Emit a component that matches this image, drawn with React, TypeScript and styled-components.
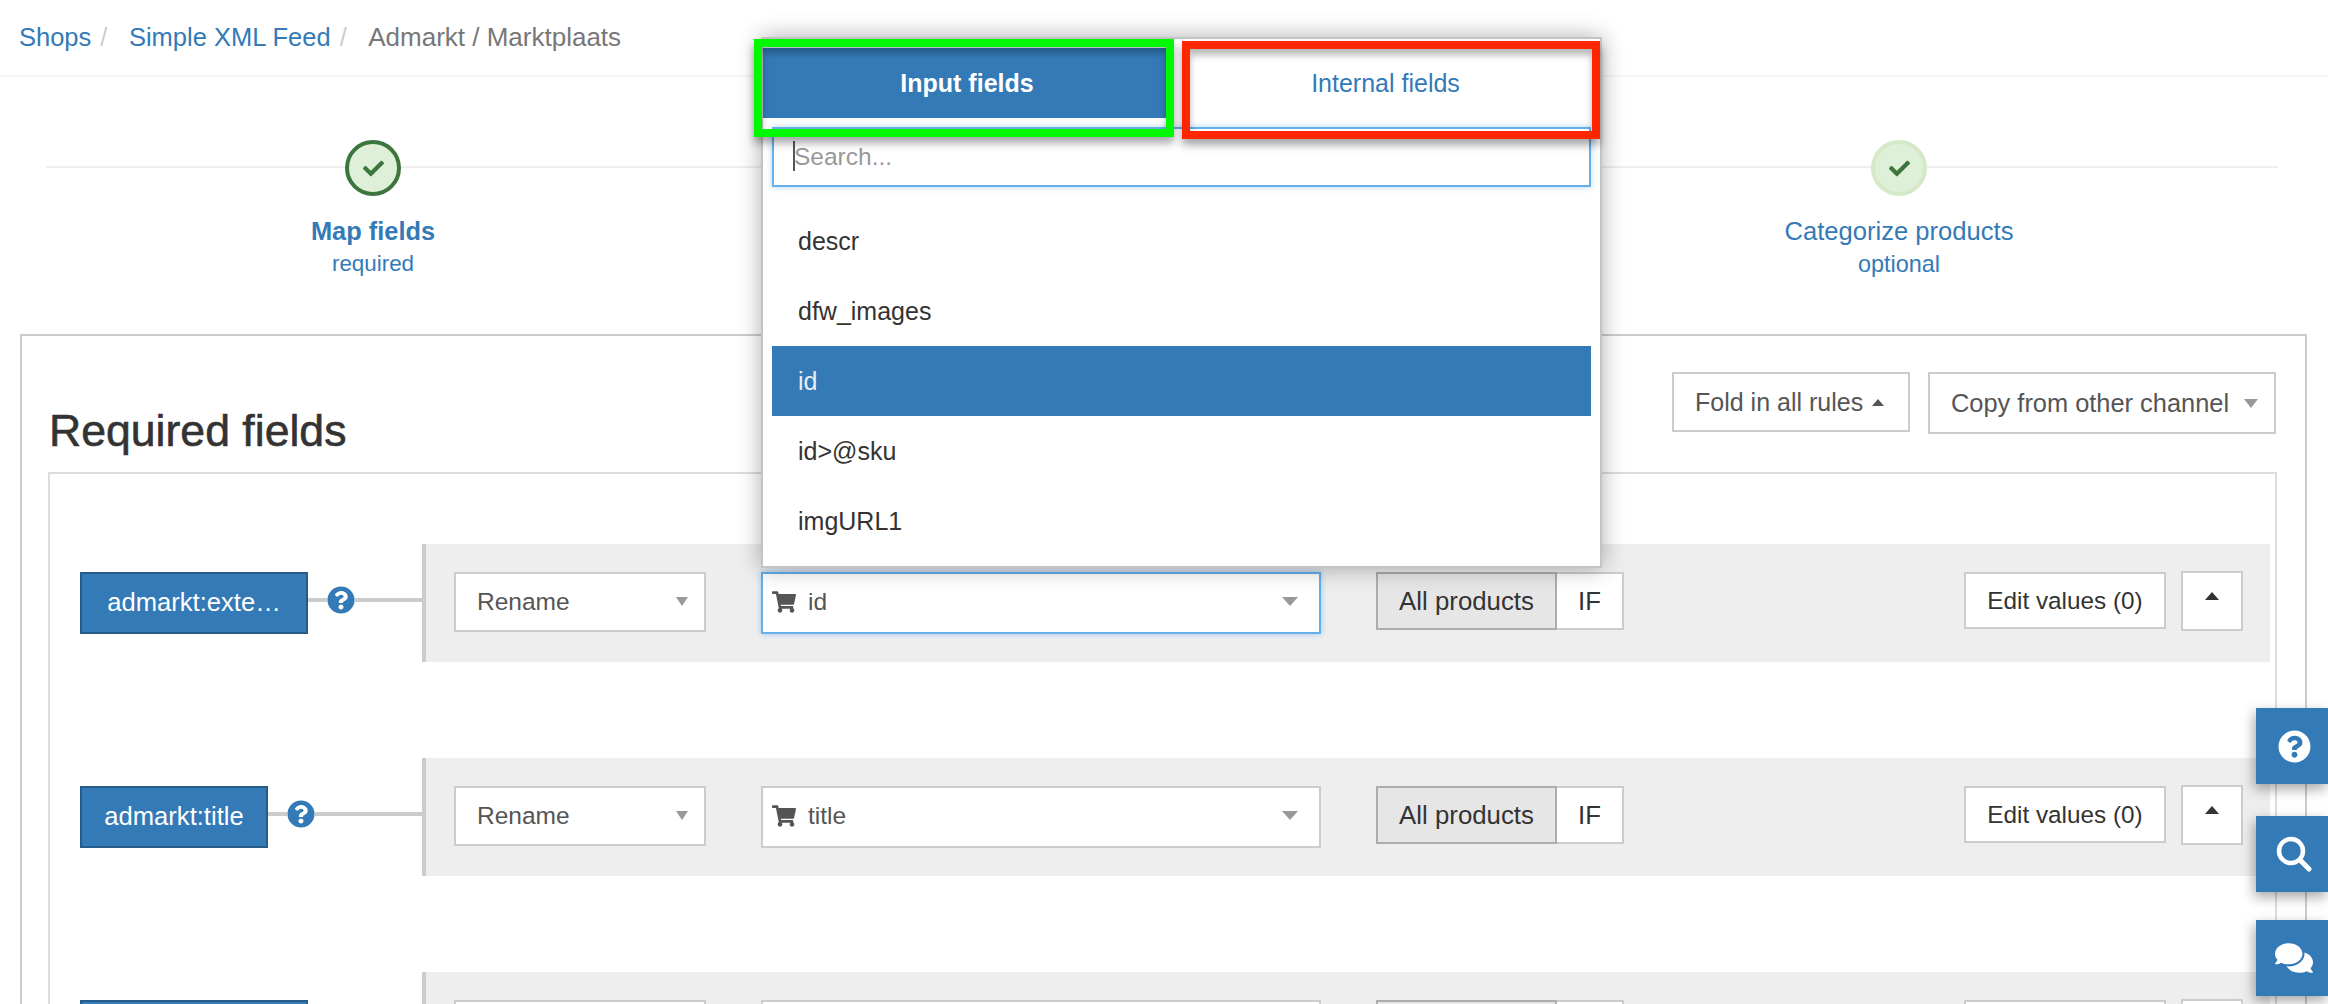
import React from "react";
import styled, { createGlobalStyle } from "styled-components";
import { FaCheck, FaComments, FaQuestionCircle, FaShoppingCart } from "react-icons/fa";

const GlobalStyle = createGlobalStyle`
  * {
    box-sizing: border-box;
  }
  html, body {
    margin: 0;
    padding: 0;
    background: #fff;
    font-family: "Liberation Sans", Arial, sans-serif;
    color: #333;
  }
`;

const Page = styled.div`
  position: relative;
  width: 2328px;
  height: 1004px;
  overflow: hidden;
  background: #fff;
`;

const Breadcrumb = styled.nav`
  display: flex;
  align-items: center;
  height: 77px;
  padding-left: 19px;
  padding-bottom: 1px;
  border-bottom: 2px solid #f5f5f5;
  font-size: 25.5px;
`;

const Crumb = styled.a<{ $active?: boolean }>`
  color: ${(p) => (p.$active ? "#777" : "#337ab7")};
  font-size: ${(p) => (p.$active ? 26 : 25.5)}px;
`;

const CrumbSep = styled.span`
  margin: 0 21.5px 0 9px;
  color: #ccc;
`;

const Stepper = styled.section`
  position: relative;
  display: flex;
  justify-content: space-between;
  height: 257px;
  margin: 0 50px 0 46px;
  padding: 63px 179px 0 127px;

  &::before {
    content: "";
    position: absolute;
    top: 89px;
    left: 0;
    right: 0;
    height: 2px;
    background: #eee;
  }
`;

const Step = styled.div`
  position: relative;
  display: flex;
  flex-direction: column;
  align-items: center;
  width: 400px;
  color: #337ab7;
`;

const StepCircle = styled.div<{ $current?: boolean }>`
  display: flex;
  align-items: center;
  justify-content: center;
  width: 56px;
  height: 56px;
  border-radius: 50%;
  border: 4px solid ${(p) => (p.$current ? "#3c763d" : "#d6e9c6")};
  background: #dff0d8;
  color: #3c763d;
`;

const StepTitle = styled.div<{ $current?: boolean }>`
  margin-top: 20px;
  font-size: ${(p) => (p.$current ? 25.4 : 25.6)}px;
  line-height: 30px;
  font-weight: ${(p) => (p.$current ? 700 : 400)};
`;

const StepHint = styled.div<{ $current?: boolean }>`
  margin-top: 3px;
  font-size: ${(p) => (p.$current ? 22.4 : 23.4)}px;
  line-height: 30px;
`;

const OuterPanel = styled.section`
  margin: 0 21px 0 20px;
  padding: 36px 28px 0 26px;
  border: 2px solid #ccc;
  border-bottom: 0;
  height: 700px;
`;

const PanelHead = styled.header`
  display: flex;
  align-items: flex-start;
  gap: 18px;
  height: 100px;
  padding-right: 1px;
`;

const Heading = styled.h2`
  margin: 34px auto 0 1px;
  font-size: 44.6px;
  line-height: 50px;
  font-weight: 400;
  color: #333;
  -webkit-text-stroke: 0.6px #333;
`;

const HeadButton = styled.button<{ $width: number; $height: number; $size: number; $padRight: number }>`
  display: flex;
  align-items: center;
  justify-content: space-between;
  width: ${(p) => p.$width}px;
  height: ${(p) => p.$height}px;
  padding: 0 ${(p) => p.$padRight}px 0 21px;
  border: 2px solid #ccc;
  background: #fff;
  font-family: inherit;
  font-size: ${(p) => p.$size}px;
  color: #555;
`;

const Triangle = styled.i<{ $up?: boolean; $w: number; $h: number; $color: string }>`
  display: block;
  flex: none;
  width: 0;
  height: 0;
  border-left: ${(p) => p.$w / 2}px solid transparent;
  border-right: ${(p) => p.$w / 2}px solid transparent;
  ${(p) =>
    p.$up
      ? `border-bottom: ${p.$h}px solid ${p.$color};`
      : `border-top: ${p.$h}px solid ${p.$color};`}
`;

const InnerPanel = styled.div`
  display: flex;
  flex-direction: column;
  gap: 96px;
  height: 600px;
  padding: 70px 5px 0 30px;
  border: 2px solid #ddd;
  border-bottom: 0;
`;

const Row = styled.div`
  display: flex;
  align-items: flex-start;
  flex: none;
  height: 118px;
`;

const FieldSide = styled.div`
  display: flex;
  align-items: flex-start;
  flex: none;
  width: 342px;
  padding-top: 28px;
`;

const FieldBadge = styled.div<{ $width: number }>`
  display: flex;
  align-items: center;
  justify-content: center;
  flex: none;
  width: ${(p) => p.$width}px;
  height: 62px;
  padding-bottom: 2px;
  background: #337ab7;
  border: 2px solid #265a88;
  color: #fff;
  font-size: 25.6px;
  white-space: nowrap;
`;

const Connector = styled.div`
  display: flex;
  align-items: center;
  flex: 1;
  height: 56px;
  color: #337ab7;
`;

const ConnectorLine = styled.span<{ $grow?: boolean }>`
  display: block;
  flex: ${(p) => (p.$grow ? "1" : "none")};
  width: ${(p) => (p.$grow ? "auto" : "19px")};
  height: 4px;
  background: #ccc;
`;

const RuleBar = styled.div`
  display: flex;
  align-items: flex-start;
  flex: 1;
  height: 118px;
  padding: 28px 27px 0 28px;
  background: #eee;
  border-left: 4px solid #ccc;
`;

const Select = styled.div<{ $wide?: boolean; $focused?: boolean }>`
  display: flex;
  align-items: center;
  flex: none;
  width: ${(p) => (p.$wide ? 560 : 252)}px;
  height: ${(p) => (p.$wide ? 62 : 60)}px;
  margin-right: 55px;
  padding: ${(p) => (p.$wide ? "0 21px 3px 9px" : "0 16px 1px 21px")};
  background: #fff;
  border: 2px solid ${(p) => (p.$focused ? "#66afe9" : "#ccc")};
  box-shadow: ${(p) => (p.$focused ? "0 0 6px rgba(102, 175, 233, 0.6)" : "none")};
  font-size: 24.5px;
  color: #555;
`;

const SelectText = styled.span`
  flex: 1;
  margin-left: 12px;
`;

const SelectPlain = styled.span`
  flex: 1;
`;

const ToggleGroup = styled.div`
  display: flex;
  flex: none;
  height: 58px;
`;

const Toggle = styled.button<{ $active?: boolean }>`
  width: ${(p) => (p.$active ? 181 : 67)}px;
  height: 58px;
  padding: 0;
  background: ${(p) => (p.$active ? "#e6e6e6" : "#fff")};
  border: 2px solid ${(p) => (p.$active ? "#adadad" : "#ccc")};
  border-left-width: ${(p) => (p.$active ? 2 : 0)}px;
  font-family: inherit;
  font-size: 25.8px;
  color: #333;
`;

const EditButton = styled.button`
  flex: none;
  width: 202px;
  height: 57px;
  margin-left: auto;
  padding: 0;
  background: #fff;
  border: 2px solid #ccc;
  font-family: inherit;
  font-size: 24.3px;
  color: #333;
`;

const CollapseButton = styled.button`
  display: flex;
  justify-content: center;
  flex: none;
  width: 62px;
  height: 60px;
  margin: -1px 0 0 15px;
  padding: 19px 0 0;
  background: #fff;
  border: 2px solid #ccc;
`;

const Dropdown = styled.div`
  position: absolute;
  top: 37px;
  left: 761px;
  width: 841px;
  height: 531px;
  padding: 9px 0 0;
  background: #fff;
  border: 2px solid #c4c4c4;
  box-shadow: 0 0 22px rgba(0, 0, 0, 0.32);
`;

const Tabs = styled.div`
  display: grid;
  grid-template-columns: 408px 1fr;
  height: 70px;
`;

const Tab = styled.div<{ $active?: boolean }>`
  display: flex;
  align-items: center;
  justify-content: center;
  background: ${(p) => (p.$active ? "#337ab7" : "#fff")};
  color: ${(p) => (p.$active ? "#fff" : "#337ab7")};
  font-size: 25px;
  font-weight: ${(p) => (p.$active ? 700 : 400)};
`;

const SearchBox = styled.div`
  position: relative;
  height: 60px;
  margin: 9px 9px 19px;
`;

const SearchInput = styled.input`
  display: block;
  width: 100%;
  height: 100%;
  padding: 0 20px;
  border: 2px solid #66afe9;
  outline: 0;
  box-shadow: 0 0 6px rgba(102, 175, 233, 0.5);
  font-family: inherit;
  font-size: 24.5px;

  &::placeholder {
    color: #999;
    opacity: 1;
  }
`;

const TextCursor = styled.span`
  position: absolute;
  top: 14px;
  left: 21px;
  width: 2px;
  height: 30px;
  background: #555;
`;

const OptionList = styled.ul`
  margin: 0 9px;
  padding: 0;
  list-style: none;
`;

const Option = styled.li<{ $active?: boolean }>`
  display: flex;
  align-items: center;
  height: 70px;
  padding-left: 26px;
  background: ${(p) => (p.$active ? "#337ab7" : "transparent")};
  color: ${(p) => (p.$active ? "#e9eef4" : "#333")};
  font-size: 25px;
`;

const Annotation = styled.div<{ $color: string; $left: number; $top: number; $width: number }>`
  position: absolute;
  top: ${(p) => p.$top}px;
  left: ${(p) => p.$left}px;
  width: ${(p) => p.$width}px;
  height: 98px;
  border: 8px solid ${(p) => p.$color};
  box-shadow: 0 6px 8px rgba(0, 0, 0, 0.35), inset 0 6px 7px rgba(0, 0, 0, 0.28);
`;

const FloatButton = styled.a<{ $top: number }>`
  position: absolute;
  top: ${(p) => p.$top}px;
  right: 0;
  display: flex;
  align-items: center;
  justify-content: center;
  width: 72px;
  height: 76px;
  padding-left: 4px;
  background: #337ab7;
  color: #fff;
  box-shadow: -2px 5px 12px rgba(0, 0, 0, 0.35);
`;

// the third rule only shows its top edge at the bottom of the window, so it has no labels
const rules = [
  { id: 1, field: "admarkt:exte…", width: 228, value: "id", focused: true, labelled: true },
  { id: 2, field: "admarkt:title", width: 188, value: "title", focused: false, labelled: true },
  { id: 3, field: "", width: 228, value: "", focused: false, labelled: false },
];

const options = ["descr", "dfw_images", "id", "id>@sku", "imgURL1"];

const SearchIcon = () => (
  <svg width="36" height="36" viewBox="0 0 36 36" fill="none" stroke="currentColor">
    <circle cx="15" cy="15" r="12" strokeWidth="4.5" />
    <path d="M24 24L33 33" strokeWidth="5" strokeLinecap="round" />
  </svg>
);

const App: React.FC = () => {
  return (
    <Page>
      <GlobalStyle />
      <Breadcrumb>
        <Crumb>Shops</Crumb>
        <CrumbSep>/</CrumbSep>
        <Crumb>Simple XML Feed</Crumb>
        <CrumbSep>/</CrumbSep>
        <Crumb $active>Admarkt / Marktplaats</Crumb>
      </Breadcrumb>

      <Stepper>
        <Step>
          <StepCircle $current>
            <FaCheck size={21} />
          </StepCircle>
          <StepTitle $current>Map fields</StepTitle>
          <StepHint $current>required</StepHint>
        </Step>
        <Step>
          <StepCircle>
            <FaCheck size={21} />
          </StepCircle>
          <StepTitle>Categorize products</StepTitle>
          <StepHint>optional</StepHint>
        </Step>
      </Stepper>

      <OuterPanel>
        <PanelHead>
          <Heading>Required fields</Heading>
          <HeadButton $width={238} $height={60} $size={25} $padRight={24}>
            Fold in all rules
            <Triangle $up $w={12} $h={7} $color="#555" />
          </HeadButton>
          <HeadButton $width={348} $height={62} $size={25.4} $padRight={16}>
            Copy from other channel
            <Triangle $w={14} $h={9} $color="#999" />
          </HeadButton>
        </PanelHead>

        <InnerPanel>
          {rules.map((rule) => (
            <Row key={rule.id}>
              <FieldSide>
                <FieldBadge $width={rule.width}>{rule.field}</FieldBadge>
                <Connector>
                  <ConnectorLine />
                  <FaQuestionCircle size={28} />
                  <ConnectorLine $grow />
                </Connector>
              </FieldSide>
              <RuleBar>
                <Select>
                  <SelectPlain>{rule.labelled && "Rename"}</SelectPlain>
                  <Triangle $w={13} $h={9} $color="#999" />
                </Select>
                <Select $wide $focused={rule.focused}>
                  <FaShoppingCart size={24} />
                  <SelectText>{rule.value}</SelectText>
                  <Triangle $w={16} $h={9} $color="#999" />
                </Select>
                <ToggleGroup>
                  <Toggle $active>{rule.labelled && "All products"}</Toggle>
                  <Toggle>{rule.labelled && "IF"}</Toggle>
                </ToggleGroup>
                <EditButton>{rule.labelled && "Edit values (0)"}</EditButton>
                <CollapseButton>
                  <Triangle $up $w={14} $h={8} $color="#333" />
                </CollapseButton>
              </RuleBar>
            </Row>
          ))}
        </InnerPanel>
      </OuterPanel>

      <Dropdown>
        <Tabs>
          <Tab $active>Input fields</Tab>
          <Tab>Internal fields</Tab>
        </Tabs>
        <SearchBox>
          <SearchInput placeholder="Search..." readOnly />
          <TextCursor />
        </SearchBox>
        <OptionList>
          {options.map((option) => (
            <Option key={option} $active={option === "id"}>
              {option}
            </Option>
          ))}
        </OptionList>
      </Dropdown>

      <Annotation $color="#00f900" $left={754} $top={39} $width={420} />
      <Annotation $color="#ff2600" $left={1182} $top={41} $width={418} />

      <FloatButton $top={708}>
        <FaQuestionCircle size={33} />
      </FloatButton>
      <FloatButton $top={816}>
        <SearchIcon />
      </FloatButton>
      <FloatButton $top={920}>
        <FaComments size={38} />
      </FloatButton>
    </Page>
  );
};

export default App;
